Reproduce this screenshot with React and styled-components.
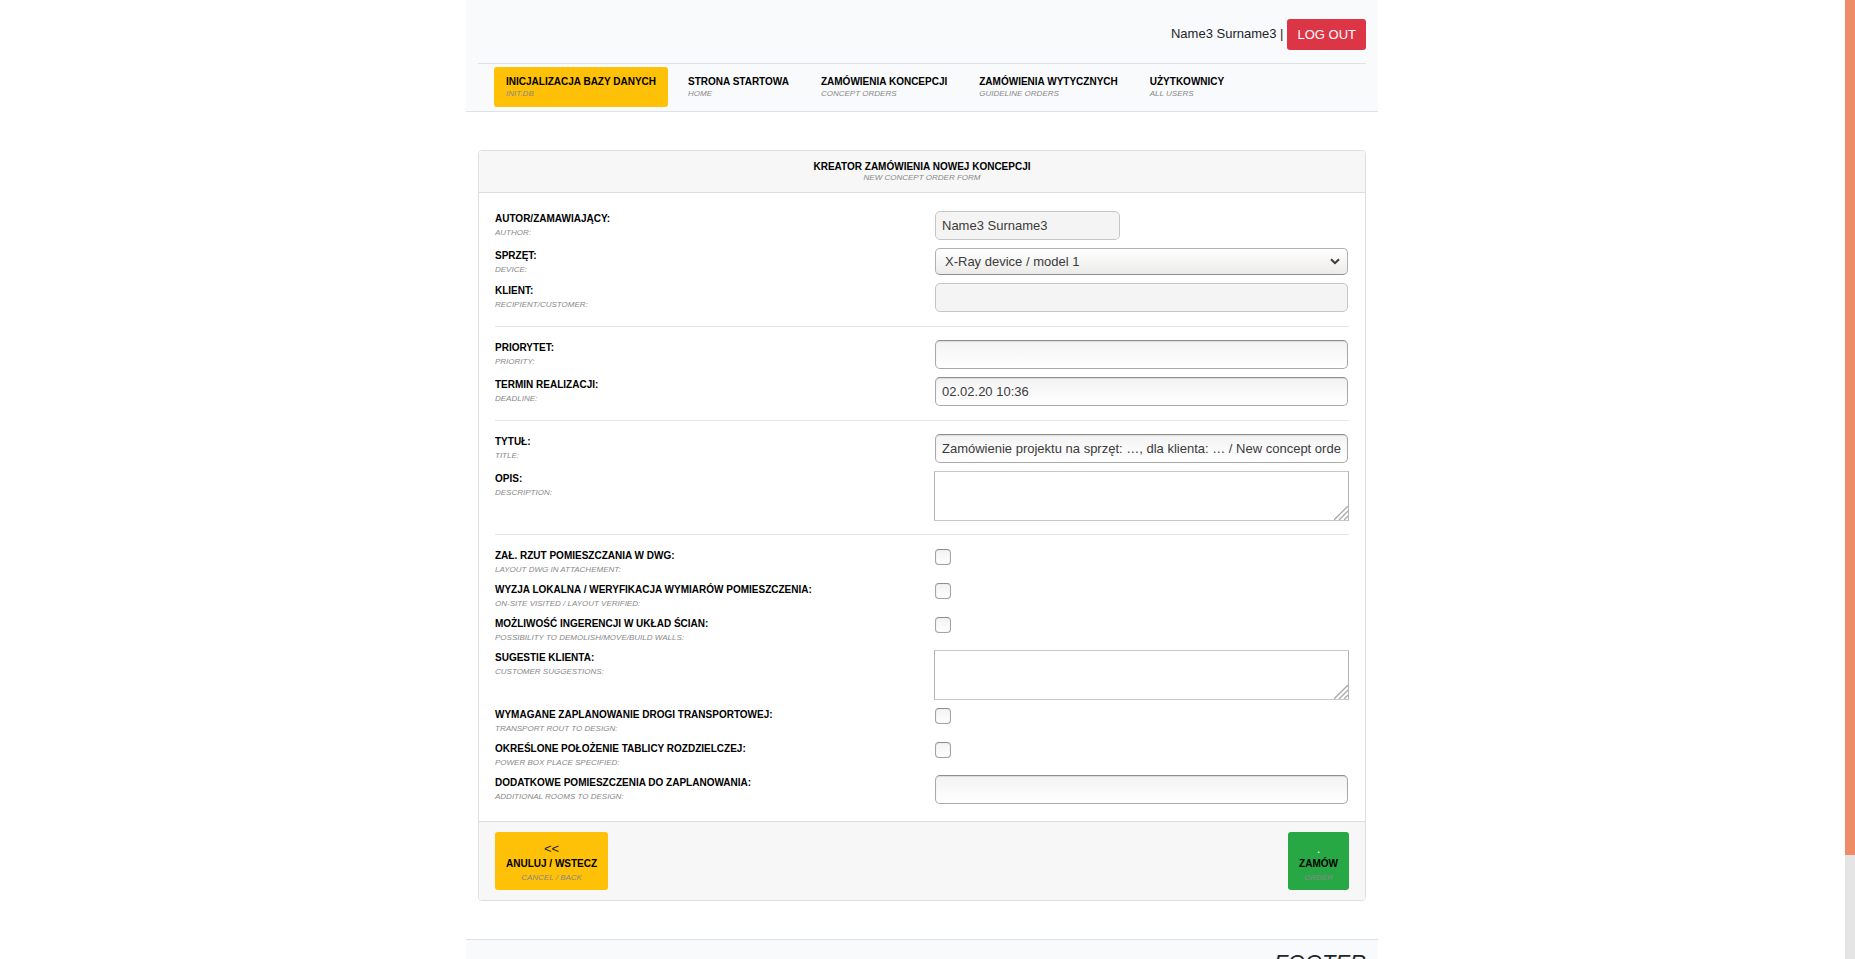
import React from "react";
import styled, { createGlobalStyle } from "styled-components";

const GlobalStyle = createGlobalStyle`
  *, *::before, *::after { box-sizing: border-box; }
  body {
    margin: 0;
    background: #fff;
    color: #212529;
    font: 13px/20px "Liberation Sans", Arial, sans-serif;
  }
`;

const Page = styled.div`
  display: flex;
  height: 100vh;
`;

const Viewport = styled.div`
  flex: 1;
  padding-right: 1px;
  overflow-y: auto;
  scrollbar-width: none;
`;

const ScrollTrack = styled.div`
  display: grid;
  grid-template-rows: 107fr 13fr;
  width: 10px;
  background: #e5e5e5;
`;

const ScrollThumb = styled.div`
  background: #ef8c68;
`;

const Container = styled.div`
  width: 100%;
  max-width: 912px;
  margin: 0 auto;
`;

const Header = styled.header`
  padding: 0 12px;
  background: #f8fafc;
  border-bottom: 1px solid #dee2e6;
`;

const UserBar = styled.div`
  display: flex;
  justify-content: flex-end;
  align-items: center;
  gap: 4px;
  padding: 19px 0 13px;
  border-bottom: 1px solid #dee2e6;
`;

const UserName = styled.span`
  padding-bottom: 2px;
`;

const variants = {
  danger: { background: "#dc3545", color: "#fff" },
  warning: { background: "#ffc107", color: "#212529" },
  success: { background: "#28a745", color: "#fff" },
};

const Button = styled.button`
  padding: 5px 10px;
  border: 0;
  border-radius: 3px;
  background: ${(p) => variants[p.$variant].background};
  color: ${(p) => variants[p.$variant].color};
  font: inherit;
  line-height: 21px;
  text-align: center;
  cursor: pointer;
`;

const StackButton = styled(Button)`
  display: flex;
  flex-direction: column;
  align-items: center;
  padding: 8px 11px 6px;
  line-height: 17px;
`;

const Nav = styled.nav`
  display: flex;
  gap: 8px;
  padding: 3px 16px 4px;
`;

const NavLink = styled.a`
  display: block;
  padding: 8px 12px;
  border-radius: 3px;
  background: ${(p) => (p.$active ? "#ffc107" : "transparent")};
  text-decoration: none;
`;

const Primary = styled.span`
  display: block;
  color: #000;
  font-size: 10px;
  font-weight: bold;
  line-height: ${(p) => (p.$tight ? "12px" : "14px")};
  white-space: nowrap;
`;

const Secondary = styled.span`
  display: block;
  color: #888;
  font-size: 8px;
  font-style: italic;
  line-height: ${(p) => (p.$tight ? "10px" : "13px")};
  white-space: nowrap;
`;

const Card = styled.form`
  margin: 38px 12px;
  border: 1px solid #dfdfdf;
  border-radius: 4px;
  overflow: hidden;
`;

const CardHeader = styled.div`
  padding: 10px 16px 9px;
  background: #f7f7f7;
  border-bottom: 1px solid #dfdfdf;
  text-align: center;
`;

const CardBody = styled.div`
  padding: 17px 16px 10px;
`;

const CardFooter = styled.div`
  display: flex;
  justify-content: space-between;
  padding: 10px 16px;
  background: #f7f7f7;
  border-top: 1px solid #dfdfdf;
`;

const Divider = styled.hr`
  height: 1px;
  margin: 7px 0 12px;
  border: 0;
  background: #e5e5e5;
`;

const Row = styled.div`
  display: grid;
  grid-template-columns: 1fr 1fr;
  column-gap: 24px;
  align-items: start;
  padding: 1px 0 5px;
`;

const Label = styled.label`
  display: block;
  padding-top: 1px;
`;

const TextInput = styled.input`
  display: block;
  width: ${(p) => (p.$short ? "185px" : "calc(100% - 2px)")};
  height: 29px;
  margin: 0 1px 2px;
  padding: 0 6px;
  border: 1px solid #a9a9a9;
  border-top-color: #8e8e8e;
  border-radius: 5px;
  background: linear-gradient(#f3f3f3, #fff);
  box-shadow: inset 0 1px 1px #dcdcdc;
  color: #3b3b3b;
  font: inherit;

  &:disabled {
    border-color: #c6c6c6;
    background: #f4f4f4;
    box-shadow: none;
  }
`;

const SelectBox = styled.div`
  display: grid;
  align-items: center;
  margin: 0 1px 2px;
`;

const Select = styled.select`
  grid-area: 1 / 1;
  appearance: none;
  width: 100%;
  height: 27px;
  padding: 0 28px 0 9px;
  border: 1px solid #b0b0b0;
  border-bottom-color: #8e8e8e;
  border-radius: 5px;
  background: linear-gradient(#fff, #ecebea);
  color: #3b3b3b;
  font: inherit;
`;

const Chevron = styled.svg`
  grid-area: 1 / 1;
  justify-self: end;
  margin-right: 8px;
  pointer-events: none;
`;

const TextAreaBox = styled.div`
  display: grid;
  margin-bottom: 1px;
`;

const TextArea = styled.textarea`
  grid-area: 1 / 1;
  width: 100%;
  height: 50px;
  padding: 4px;
  border: 1px solid #c8c8c8;
  border-left-color: #b5b5b0;
  border-right-color: #b5b5b0;
  border-radius: 0;
  background: #fff;
  color: #3b3b3b;
  font: inherit;
  resize: none;
`;

const Grip = styled.svg`
  grid-area: 1 / 1;
  place-self: end;
  margin: 1px;
  pointer-events: none;
`;

const CheckBox = styled.input`
  appearance: none;
  display: block;
  width: 16px;
  height: 16px;
  margin: 1px;
  border: 1px solid #a4a4a4;
  border-top-color: #8e8e8e;
  border-radius: 4px;
  background: linear-gradient(#f3f3f3, #fff);
  box-shadow: inset 0 0 1px #c4c4c4;
`;

const Footer = styled.footer`
  padding: 8px 12px 96px;
  background: #f8fafc;
  border-top: 1px solid #dee2e6;
  font-size: 22px;
  font-style: italic;
  line-height: 30px;
  text-align: right;
`;

const navItems = [
  ["INICJALIZACJA BAZY DANYCH", "INIT.DB"],
  ["STRONA STARTOWA", "HOME"],
  ["ZAMÓWIENIA KONCEPCJI", "CONCEPT ORDERS"],
  ["ZAMÓWIENIA WYTYCZNYCH", "GUIDELINE ORDERS"],
  ["UŻYTKOWNICY", "ALL USERS"],
];

const sections = [
  [
    { id: "author", pl: "AUTOR/ZAMAWIAJĄCY:", en: "AUTHOR:", kind: "text", value: "Name3 Surname3", disabled: true, short: true },
    { id: "device", pl: "SPRZĘT:", en: "DEVICE:", kind: "select", options: ["X-Ray device / model 1"] },
    { id: "customer", pl: "KLIENT:", en: "RECIPIENT/CUSTOMER:", kind: "text", disabled: true },
  ],
  [
    { id: "priority", pl: "PRIORYTET:", en: "PRIORITY:", kind: "text" },
    { id: "deadline", pl: "TERMIN REALIZACJI:", en: "DEADLINE:", kind: "text", value: "02.02.20 10:36" },
  ],
  [
    { id: "title", pl: "TYTUŁ:", en: "TITLE:", kind: "text", value: "Zamówienie projektu na sprzęt: …, dla klienta: … / New concept order" },
    { id: "description", pl: "OPIS:", en: "DESCRIPTION:", kind: "textarea" },
  ],
  [
    { id: "dwg", pl: "ZAŁ. RZUT POMIESZCZANIA W DWG:", en: "LAYOUT DWG IN ATTACHEMENT:", kind: "checkbox" },
    { id: "visit", pl: "WYZJA LOKALNA / WERYFIKACJA WYMIARÓW POMIESZCZENIA:", en: "ON-SITE VISITED / LAYOUT VERIFIED:", kind: "checkbox" },
    { id: "walls", pl: "MOŻLIWOŚĆ INGERENCJI W UKŁAD ŚCIAN:", en: "POSSIBILITY TO DEMOLISH/MOVE/BUILD WALLS:", kind: "checkbox" },
    { id: "suggestions", pl: "SUGESTIE KLIENTA:", en: "CUSTOMER SUGGESTIONS:", kind: "textarea" },
    { id: "transport", pl: "WYMAGANE ZAPLANOWANIE DROGI TRANSPORTOWEJ:", en: "TRANSPORT ROUT TO DESIGN:", kind: "checkbox" },
    { id: "powerbox", pl: "OKREŚLONE POŁOŻENIE TABLICY ROZDZIELCZEJ:", en: "POWER BOX PLACE SPECIFIED:", kind: "checkbox" },
    { id: "rooms", pl: "DODATKOWE POMIESZCZENIA DO ZAPLANOWANIA:", en: "ADDITIONAL ROOMS TO DESIGN:", kind: "text" },
  ],
];

function Control({ field }) {
  switch (field.kind) {
    case "select":
      return (
        <SelectBox>
          <Select id={field.id}>
            {field.options.map((option) => (
              <option key={option}>{option}</option>
            ))}
          </Select>
          <Chevron width="10" height="7" viewBox="0 0 10 7" aria-hidden="true">
            <path d="M1 1.2 L5 5.2 L9 1.2" fill="none" stroke="#3b3b3b" strokeWidth="2" />
          </Chevron>
        </SelectBox>
      );
    case "textarea":
      return (
        <TextAreaBox>
          <TextArea id={field.id} />
          <Grip width="14" height="14" viewBox="0 0 14 14" aria-hidden="true">
            <path d="M0 14 L14 0 M5 14 L14 5 M10 14 L14 10" fill="none" stroke="#aaa" strokeWidth="1.4" />
          </Grip>
        </TextAreaBox>
      );
    case "checkbox":
      return <CheckBox type="checkbox" id={field.id} />;
    default:
      return (
        <TextInput
          type="text"
          id={field.id}
          defaultValue={field.value || ""}
          disabled={field.disabled}
          $short={field.short}
        />
      );
  }
}

export default function App() {
  return (
    <Page>
      <GlobalStyle />
      <Viewport>
        <Container>
          <Header>
            <UserBar>
              <UserName>Name3 Surname3 |</UserName>
              <Button type="button" $variant="danger">LOG OUT</Button>
            </UserBar>
            <Nav>
              {navItems.map(([pl, en], index) => (
                <NavLink href="#" key={pl} $active={index === 0}>
                  <Primary>{pl}</Primary>
                  <Secondary $tight>{en}</Secondary>
                </NavLink>
              ))}
            </Nav>
          </Header>
          <Card>
            <CardHeader>
              <Primary $tight>KREATOR ZAMÓWIENIA NOWEJ KONCEPCJI</Primary>
              <Secondary $tight>NEW CONCEPT ORDER FORM</Secondary>
            </CardHeader>
            <CardBody>
              {sections.map((fields, index) => (
                <React.Fragment key={fields[0].id}>
                  {index > 0 && <Divider />}
                  {fields.map((field) => (
                    <Row key={field.id}>
                      <Label htmlFor={field.id}>
                        <Primary>{field.pl}</Primary>
                        <Secondary>{field.en}</Secondary>
                      </Label>
                      <Control field={field} />
                    </Row>
                  ))}
                </React.Fragment>
              ))}
            </CardBody>
            <CardFooter>
              <StackButton type="button" $variant="warning">
                &lt;&lt;
                <Primary>ANULUJ / WSTECZ</Primary>
                <Secondary>CANCEL / BACK</Secondary>
              </StackButton>
              <StackButton type="button" $variant="success">
                .
                <Primary>ZAMÓW</Primary>
                <Secondary>ORDER</Secondary>
              </StackButton>
            </CardFooter>
          </Card>
          <Footer>FOOTER</Footer>
        </Container>
      </Viewport>
      <ScrollTrack aria-hidden="true">
        <ScrollThumb />
      </ScrollTrack>
    </Page>
  );
}
